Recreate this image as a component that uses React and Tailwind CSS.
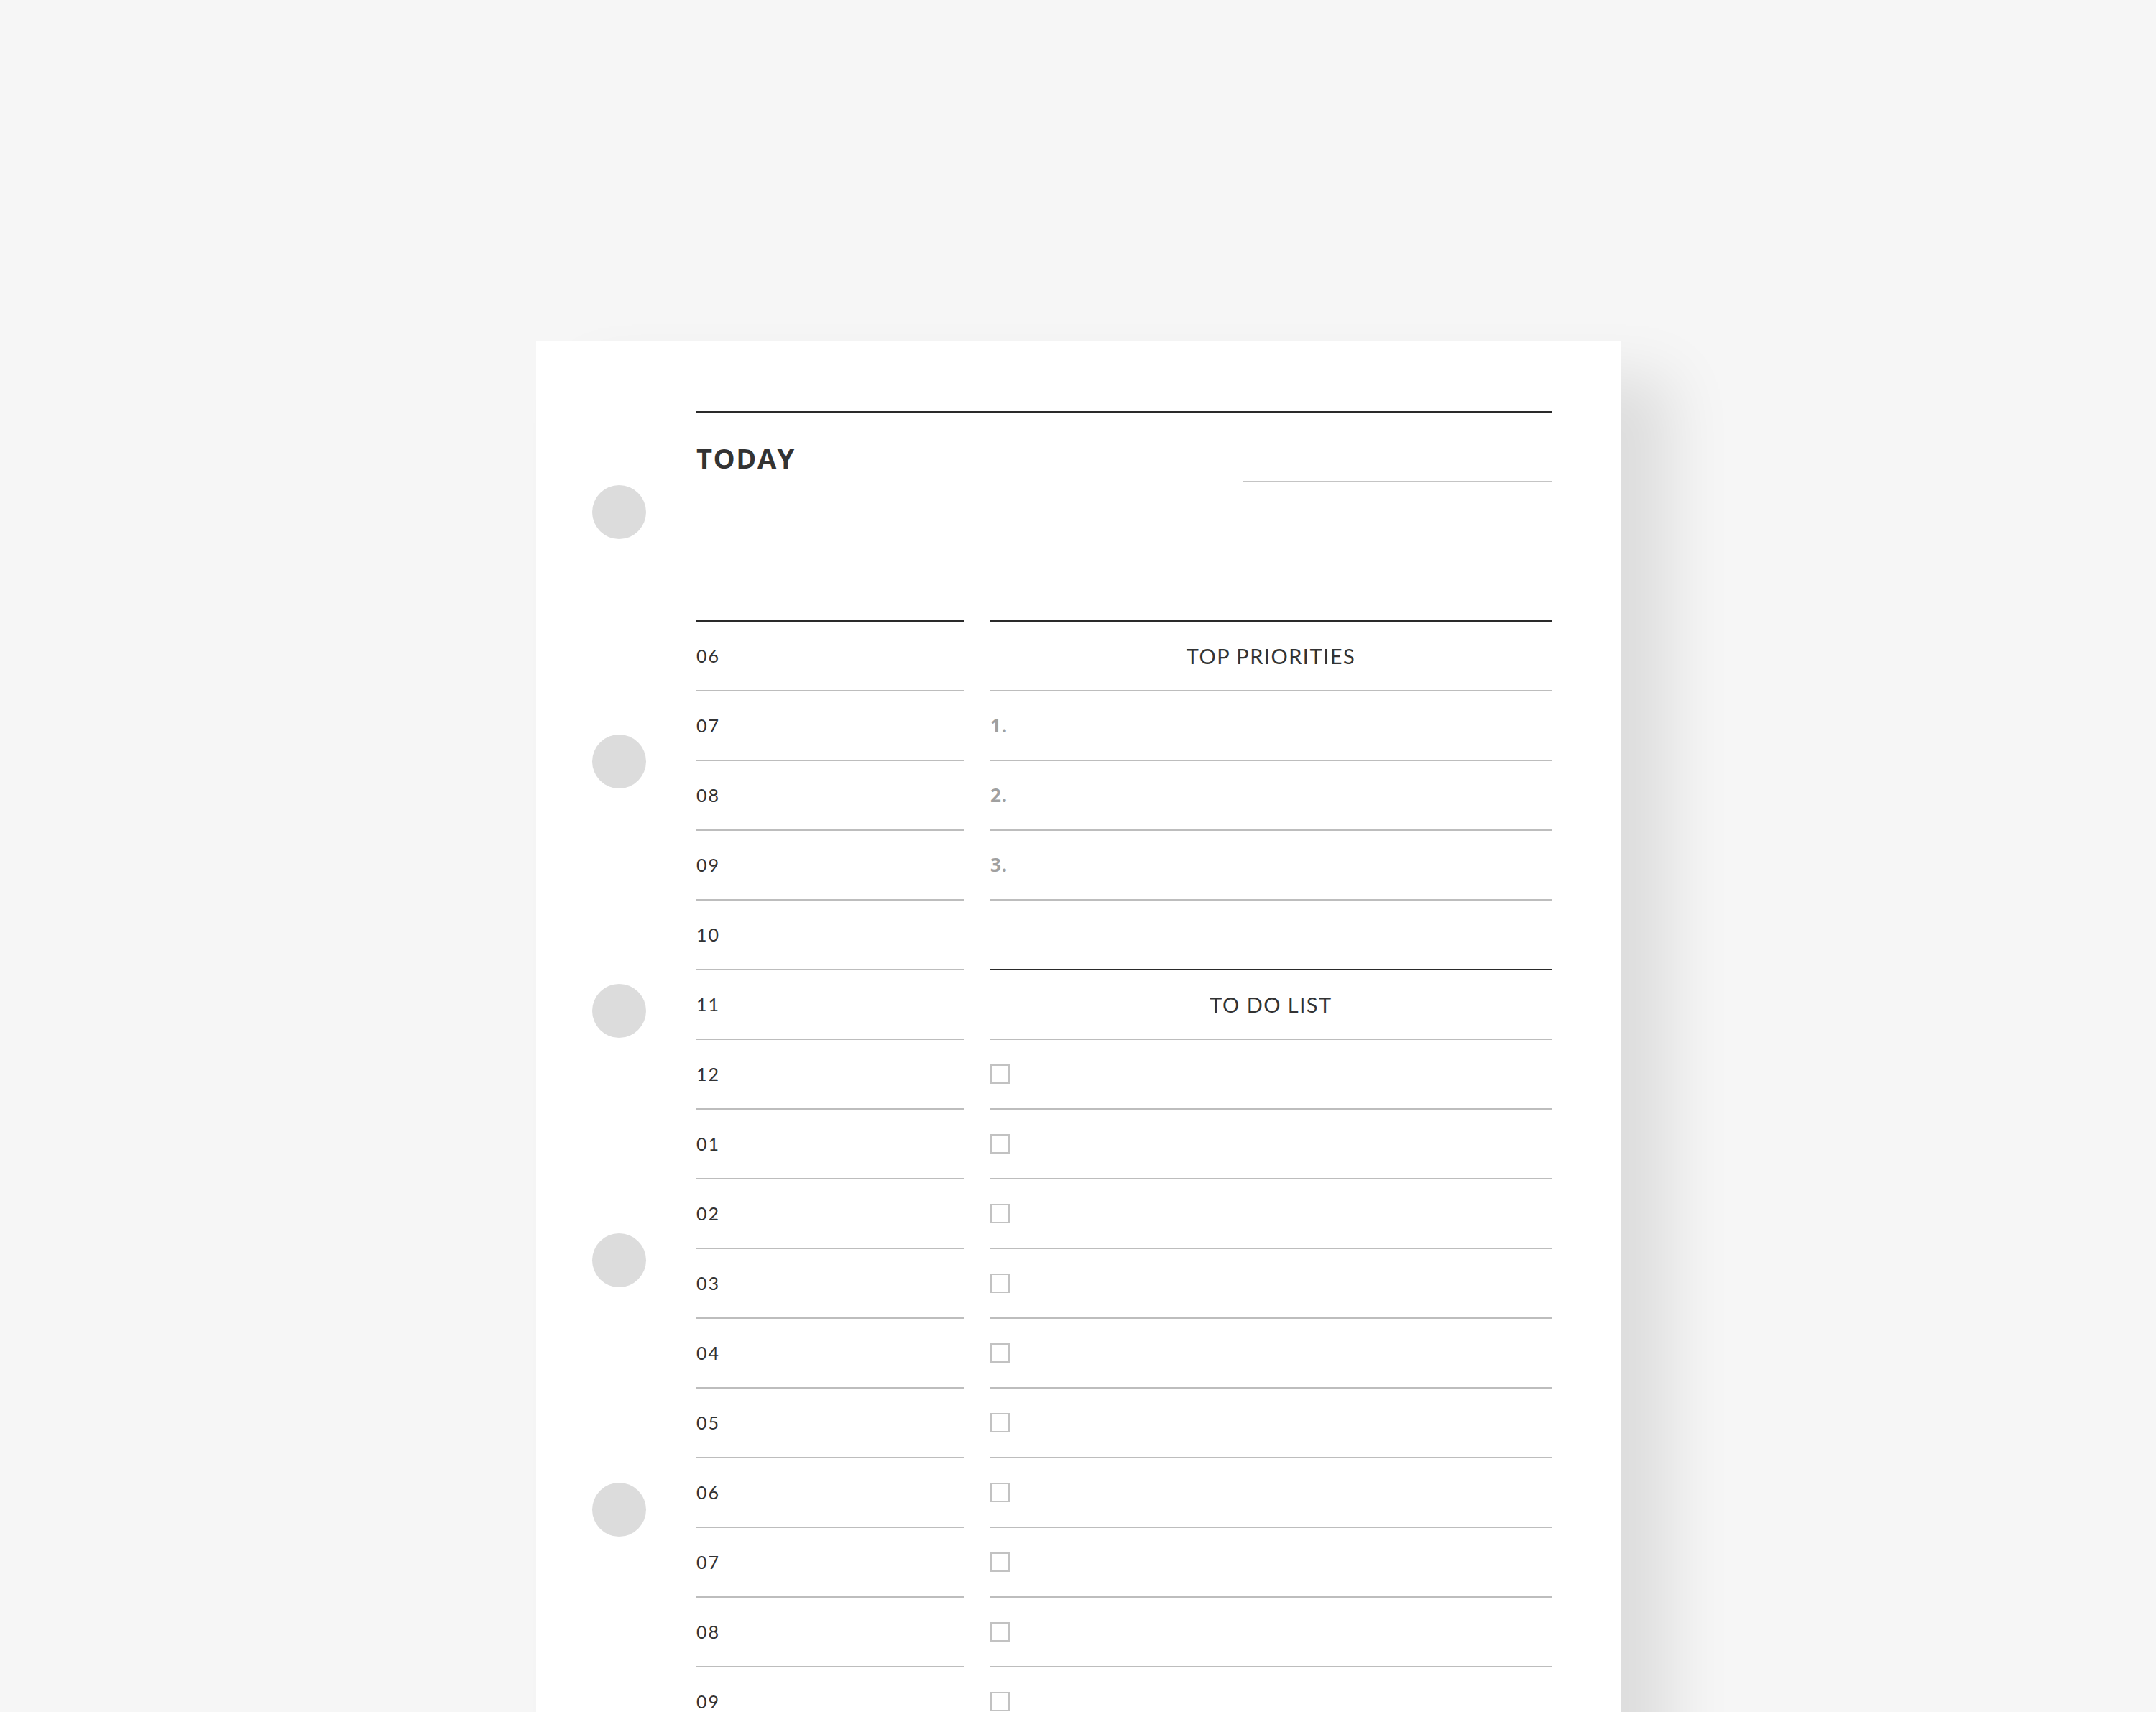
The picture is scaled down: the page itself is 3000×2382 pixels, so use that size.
const hours = ['06', '07', '08', '09', '10', '11', '12', '01', '02', '03', '04', '05', '06', '07', '08', '09', '10', '11'];

const HourRow = ({ label }) => (
  <div className="h-[97px] border-b-2 border-[#bdbdbd] flex items-center">
    <span className="font-['Lato',sans-serif] text-[25px] tracking-[2px] text-[#333]">{label}</span>
  </div>
);

const Checkbox = () => (
  <span className="block w-[27px] h-[27px] border-2 border-[#c2c2c2]" />
);

const App = () => {
  const todoRows = hours.length - 6;

  return (
    <div className="w-full h-[2382px] bg-[#f6f6f6] overflow-hidden pt-[475px] pl-[746px]">
      <div className="w-[1509px] h-[2200px] bg-white flex shadow-[70px_50px_80px_rgba(0,0,0,0.1)]">
        {/* binder holes */}
        <div className="w-[223px] shrink-0 pl-[78px] pt-[200px] flex flex-col gap-[272px]">
          {[0, 1, 2, 3, 4, 5].map((i) => (
            <div key={i} className="w-[75px] h-[75px] rounded-full bg-[#dcdcdc]" />
          ))}
        </div>

        <div className="w-[1190px] pt-[97px]">
          {/* header */}
          <div className="h-[291px] border-t-2 border-[#2a2a2a] flex justify-between items-start">
            <h1 className="mt-[44px] font-['Open_Sans',sans-serif] font-bold text-[38px] leading-none tracking-[1.5px] text-[#333]">
              TODAY
            </h1>
            <div className="mt-[95px] w-[430px] h-[2px] bg-[#c4c4c4]" />
          </div>

          <div className="flex gap-[37px]">
            {/* schedule */}
            <div className="w-[372px] border-t-2 border-[#2a2a2a]">
              {hours.map((h, i) => (
                <HourRow key={i} label={h} />
              ))}
            </div>

            {/* priorities + todo */}
            <div className="w-[781px] border-t-2 border-[#2a2a2a] font-['Lato',sans-serif]">
              <div className="h-[97px] border-b-2 border-[#bdbdbd] flex items-center justify-center">
                <span className="text-[29px] tracking-[1.5px] text-[#333]">TOP PRIORITIES</span>
              </div>
              {['1.', '2.', '3.'].map((n) => (
                <div key={n} className="h-[97px] border-b-2 border-[#bdbdbd] flex items-center">
                  <span className="font-['Open_Sans',sans-serif] text-[26px] font-bold tracking-[1px] text-[#a0a0a0]">{n}</span>
                </div>
              ))}
              <div className="h-[97px] border-b-2 border-[#2a2a2a]" />
              <div className="h-[97px] border-b-2 border-[#bdbdbd] flex items-center justify-center">
                <span className="text-[29px] tracking-[1.5px] text-[#333]">TO DO LIST</span>
              </div>
              {Array.from({ length: todoRows }).map((_, i) => (
                <div key={i} className="h-[97px] border-b-2 border-[#bdbdbd] flex items-center">
                  <Checkbox />
                </div>
              ))}
            </div>
          </div>
        </div>
      </div>
    </div>
  );
};

export default App;
